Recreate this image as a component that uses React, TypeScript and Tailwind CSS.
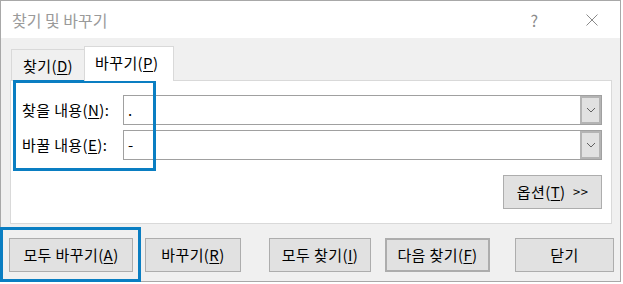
const font = { fontFamily: '"Noto Sans CJK KR", "Noto Sans", sans-serif' };

function Mn({ children }: { children: string }) {
  return <span className="underline underline-offset-2">{children}</span>;
}

function Combo({ value }: { value: string }) {
  return (
    <div className="flex h-[30px] w-[479px] border border-[#a0a0a0] bg-white">
      <div className="flex-1 pl-[4px] text-[15px] leading-[27px] text-black">{value}</div>
      <div className="flex w-[21px] items-center justify-center border-2 border-[#b4b4b4] bg-[#e1e1e1]">
        <svg width="10" height="6" viewBox="0 0 10 6">
          <path d="M1 1 L5 5 L9 1" fill="none" stroke="#606060" strokeWidth="1" />
        </svg>
      </div>
    </div>
  );
}

function Btn({ children, className = "" }: { children: React.ReactNode; className?: string }) {
  return (
    <div
      className={`flex h-[34px] items-center justify-center border border-[#adadad] bg-[#e1e1e1] text-[15px] tracking-[0.4px] text-black ${className}`}
    >
      {children}
    </div>
  );
}

export default function App() {
  return (
    <div className="relative h-[284px] w-[623px] overflow-hidden bg-white" style={font}>
      <div className="flex h-[282px] w-[621px] flex-col border border-[#a8a8a8] bg-[#f0f0f0]">
        {/* title bar */}
        <div className="flex h-[37px] items-center bg-white pl-[11px] text-[16px] text-[#9a9a9a]">
          <span className="flex-1">찾기 및 바꾸기</span>
          <span className="mr-[48px] text-[16px] text-[#8a8a8a]">?</span>
          <svg width="12" height="12" viewBox="0 0 12 12" className="mr-[22px]">
            <path d="M0.5 0.5 L11.5 11.5 M11.5 0.5 L0.5 11.5" stroke="#8a8a8a" strokeWidth="1" />
          </svg>
        </div>

        {/* tabs */}
        <div className="flex h-[42px] items-end pl-[10px]">
          <div className="flex h-[31px] w-[73px] items-center border-l border-t border-[#d9d9d9] pl-[11px] pt-[2px] text-[15px] tracking-[0.4px] text-black">
            찾기(<Mn>D</Mn>)
          </div>
          <div className="relative z-10 -mb-px flex h-[35px] w-[90px] items-center border border-b-0 border-[#d9d9d9] bg-white pl-[10px] pb-[2px] text-[15px] tracking-[0.4px] text-black">
            바꾸기(<Mn>P</Mn>)
          </div>
        </div>

        {/* panel */}
        <div className="ml-[9px] flex h-[144px] w-[602px] flex-col border border-[#d9d9d9] bg-white pl-[11px] pr-[9px] pt-[14px]">
          <div className="flex items-center">
            <span className="w-[101px] text-[15px] tracking-[0.4px] text-black">
              찾을 내용(<Mn>N</Mn>):
            </span>
            <Combo value="." />
          </div>
          <div className="mt-[5px] flex items-center">
            <span className="w-[101px] text-[15px] tracking-[0.4px] text-black">
              바꿀 내용(<Mn>E</Mn>):
            </span>
            <Combo value="-" />
          </div>
          <div className="mt-[15px] flex justify-end">
            <Btn className="h-[33px] w-[99px]">
              옵션(<Mn>T</Mn>)&nbsp;&nbsp;<span className="text-[13px]">&gt;&gt;</span>
            </Btn>
          </div>
        </div>

        {/* buttons */}
        <div className="mt-[14px] flex items-center">
          <Btn className="ml-[8px] w-[124px]">
            모두 바꾸기(<Mn>A</Mn>)
          </Btn>
          <Btn className="ml-[12px] w-[96px]">
            바꾸기(<Mn>R</Mn>)
          </Btn>
          <Btn className="ml-[28px] w-[102px]">
            모두 찾기(<Mn>I</Mn>)
          </Btn>
          <Btn className="ml-[14px] w-[105px] border-2 border-[#0078d7]">
            다음 찾기(<Mn>F</Mn>)
          </Btn>
          <Btn className="ml-[25px] w-[99px]">닫기</Btn>
        </div>
      </div>

      {/* annotation highlights */}
      <div className="pointer-events-none absolute left-[13px] top-[80px] h-[91px] w-[143px] border-[3px] border-[#0a7ec2]" />
      <div className="pointer-events-none absolute left-0 top-[227px] h-[55px] w-[141px] border-[3px] border-[#0a7ec2]" />
    </div>
  );
}
